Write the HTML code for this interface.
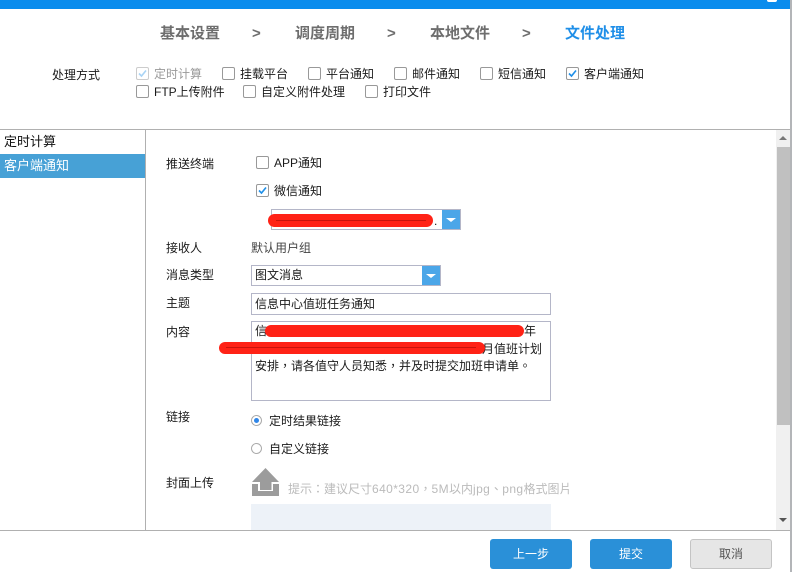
<!DOCTYPE html>
<html><head><meta charset="utf-8">
<style>
html,body{margin:0;padding:0;background:#fff}
body{width:795px;height:572px;position:relative;overflow:hidden;font-family:"Liberation Sans","Noto Sans CJK SC",sans-serif;font-size:12px;color:#1a1a1a}
.a{position:absolute;white-space:nowrap}
.t{line-height:16px;height:16px}
.s{font-size:15px;font-weight:bold;color:#6e6e6e;line-height:20px;top:24px}
.cb{position:absolute;width:11px;height:11px;border:1px solid #999;border-radius:2px;background:#fff}
.cb svg{position:absolute;left:0;top:0}
.cb.d{border-color:#ccc}
.box{position:absolute;border:1px solid #b4b6c8;background:#fff;box-sizing:border-box}
.arrow{position:absolute;background:#4ba6e8}
.arrow:after{content:"";position:absolute;left:4px;top:8px;border-left:5px solid transparent;border-right:5px solid transparent;border-top:4px solid #fff}
.btn{position:absolute;top:539px;width:82px;height:30px;box-sizing:border-box;border-radius:3px;background:#2a90d8;color:#fff;text-align:center;line-height:30px;font-size:12px}
.red{position:absolute;background:#ff2216;border-radius:7px}
.tc{font-family:"Liberation Sans","Noto Sans CJK TC",sans-serif}
.l{letter-spacing:.4px}
</style></head><body>
<div class="a" style="left:0;top:0;width:790px;height:9px;background:#0a8ced"></div>
<div class="a" style="left:767px;top:0;width:10px;height:2px;background:#fff;border-radius:0 0 5px 5px"></div>
<div class="a" style="left:790px;top:0;width:2px;height:572px;background:#b3b5b8"></div>
<div class="a" style="left:0;top:129px;width:790px;height:1px;background:#b0b0b0"></div>
<div class="a" style="left:145px;top:130px;width:1px;height:400px;background:#b0b0b0"></div>
<div class="a" style="left:0;top:530px;width:790px;height:1px;background:#b0b0b0"></div>

<div class="a s" style="left:160px">基本设置</div>
<div class="a s" style="left:252px">&gt;</div>
<div class="a s" style="left:295px">调度周期</div>
<div class="a s" style="left:387px">&gt;</div>
<div class="a s" style="left:430px">本地文件</div>
<div class="a s" style="left:522px">&gt;</div>
<div class="a s" style="left:565px;color:#1f8fe8">文件处理</div>

<div class="a t" style="left:52px;top:67px">处理方式</div>

<div class="cb d" style="left:136px;top:67px"><svg width="11" height="11"><path d="M2 5.5L4.5 8L9 2.5" fill="none" stroke="#a9d4f5" stroke-width="1.6"/></svg></div>
<div class="a t" style="left:154px;top:66px;color:#999">定时计算</div>
<div class="cb" style="left:222px;top:67px"></div>
<div class="a t" style="left:240px;top:66px">挂载平台</div>
<div class="cb" style="left:308px;top:67px"></div>
<div class="a t" style="left:326px;top:66px">平台通知</div>
<div class="cb" style="left:394px;top:67px"></div>
<div class="a t" style="left:412px;top:66px">邮件通知</div>
<div class="cb" style="left:480px;top:67px"></div>
<div class="a t" style="left:498px;top:66px">短信通知</div>
<div class="cb" style="left:566px;top:67px"><svg width="11" height="11"><path d="M2 5.5L4.5 8L9 2.5" fill="none" stroke="#1f8fe8" stroke-width="1.6"/></svg></div>
<div class="a t" style="left:584px;top:66px">客户端通知</div>

<div class="cb" style="left:136px;top:85px"></div>
<div class="a t" style="left:154px;top:84px">FTP上传附件</div>
<div class="cb" style="left:243px;top:85px"></div>
<div class="a t" style="left:261px;top:84px">自定义附件处理</div>
<div class="cb" style="left:365px;top:85px"></div>
<div class="a t" style="left:383px;top:84px">打印文件</div>

<div class="a t" style="left:4px;top:134px;font-size:13px;color:#111">定时计算</div>
<div class="a" style="left:0;top:154px;width:145px;height:24px;background:#47a1d6;color:#fff;font-size:13px;line-height:24px;text-indent:4px">客户端通知</div>

<div class="a t" style="left:166px;top:156px">推送终端</div>
<div class="cb" style="left:256px;top:156px"></div>
<div class="a t" style="left:274px;top:155px">APP通知</div>
<div class="cb" style="left:256px;top:184px"><svg width="11" height="11"><path d="M2 5.5L4.5 8L9 2.5" fill="none" stroke="#1f8fe8" stroke-width="1.6"/></svg></div>
<div class="a t" style="left:274px;top:183px">微信通知</div>

<div class="box" style="left:271px;top:209px;width:190px;height:21px"></div>
<div class="arrow" style="left:442px;top:210px;width:18px;height:19px"></div>
<div class="red" style="left:268px;top:214px;width:165px;height:13px"></div>
<div class="a" style="left:276px;top:220px;width:150px;height:1px;background:#c8140c"></div>
<div class="a" style="left:434px;top:214px;line-height:14px">.</div>

<div class="a t" style="left:166px;top:240px">接收人</div>
<div class="a t" style="left:251px;top:240px;color:#444">默认用户组</div>

<div class="a t" style="left:166px;top:267px">消息类型</div>
<div class="box" style="left:251px;top:265px;width:190px;height:21px;line-height:19px;padding-left:3px">图文消息</div>
<div class="arrow" style="left:422px;top:266px;width:18px;height:19px"></div>

<div class="a t" style="left:166px;top:295px">主题</div>
<div class="box" style="left:251px;top:293px;width:300px;height:22px;line-height:20px;padding-left:3px">信息中心值班任务通知</div>

<div class="a t" style="left:166px;top:324px">内容</div>
<div class="box" style="left:251px;top:321px;width:300px;height:80px"></div>
<div class="a t" style="left:255px;top:323px">信</div>
<div class="a t" style="left:524px;top:323px">年</div>
<div class="a t" style="left:482px;top:341px">月值班计划</div>
<div class="a t tc" style="left:255px;top:358px">安排，请各值守人员知悉，并及时提交加班申请单。</div>
<div class="red" style="left:265px;top:325px;width:259px;height:12px"></div>
<div class="red" style="left:219px;top:342px;width:266px;height:12px"></div>
<div class="a" style="left:226px;top:347px;width:250px;height:1px;background:#c8140c"></div>

<div class="a t" style="left:166px;top:409px">链接</div>
<div class="a" style="left:251px;top:415px;width:11px;height:11px;border-radius:50%;border:1px solid #aaa;box-sizing:border-box;background:#fff"></div>
<div class="a" style="left:254px;top:418px;width:5px;height:5px;border-radius:50%;background:#2f86e8"></div>
<div class="a t" style="left:269px;top:413px">定时结果链接</div>
<div class="a" style="left:251px;top:443px;width:11px;height:11px;border-radius:50%;border:1px solid #aaa;box-sizing:border-box;background:#fff"></div>
<div class="a t" style="left:269px;top:441px">自定义链接</div>

<div class="a t" style="left:166px;top:475px">封面上传</div>
<svg class="a" style="left:252px;top:467px" width="28" height="30" viewBox="0 0 28 30"><path d="M13.5 1L27 15H19.5V23H8V15H0Z" fill="#9c9c9c"/><path d="M0 17H6V24H21V17H27V29H0Z" fill="#9c9c9c"/></svg>
<div class="a t tc" style="left:288px;top:481px;color:#bbb">提示：建议尺寸<span class="l">640*320</span>，<span class="l">5M</span>以内<span class="l">jpg</span>、<span class="l">png</span>格式图片</div>
<div class="a" style="left:251px;top:504px;width:300px;height:26px;background:#edf2f8"></div>

<div class="a" style="left:776px;top:130px;width:14px;height:400px;background:#f0f0f0"></div>
<div class="a" style="left:777px;top:147px;width:13px;height:278px;background:#c0c0c0"></div>
<div class="a" style="left:779px;top:136px;border-left:4px solid transparent;border-right:4px solid transparent;border-bottom:4px solid #777"></div>
<div class="a" style="left:779px;top:518px;border-left:4px solid transparent;border-right:4px solid transparent;border-top:4px solid #555"></div>

<div class="btn" style="left:490px">上一步</div>
<div class="btn" style="left:590px">提交</div>
<div class="btn" style="left:690px;background:#e6e6e6;border:1px solid #c4c4c4;color:#555;line-height:28px">取消</div>
</body></html>
